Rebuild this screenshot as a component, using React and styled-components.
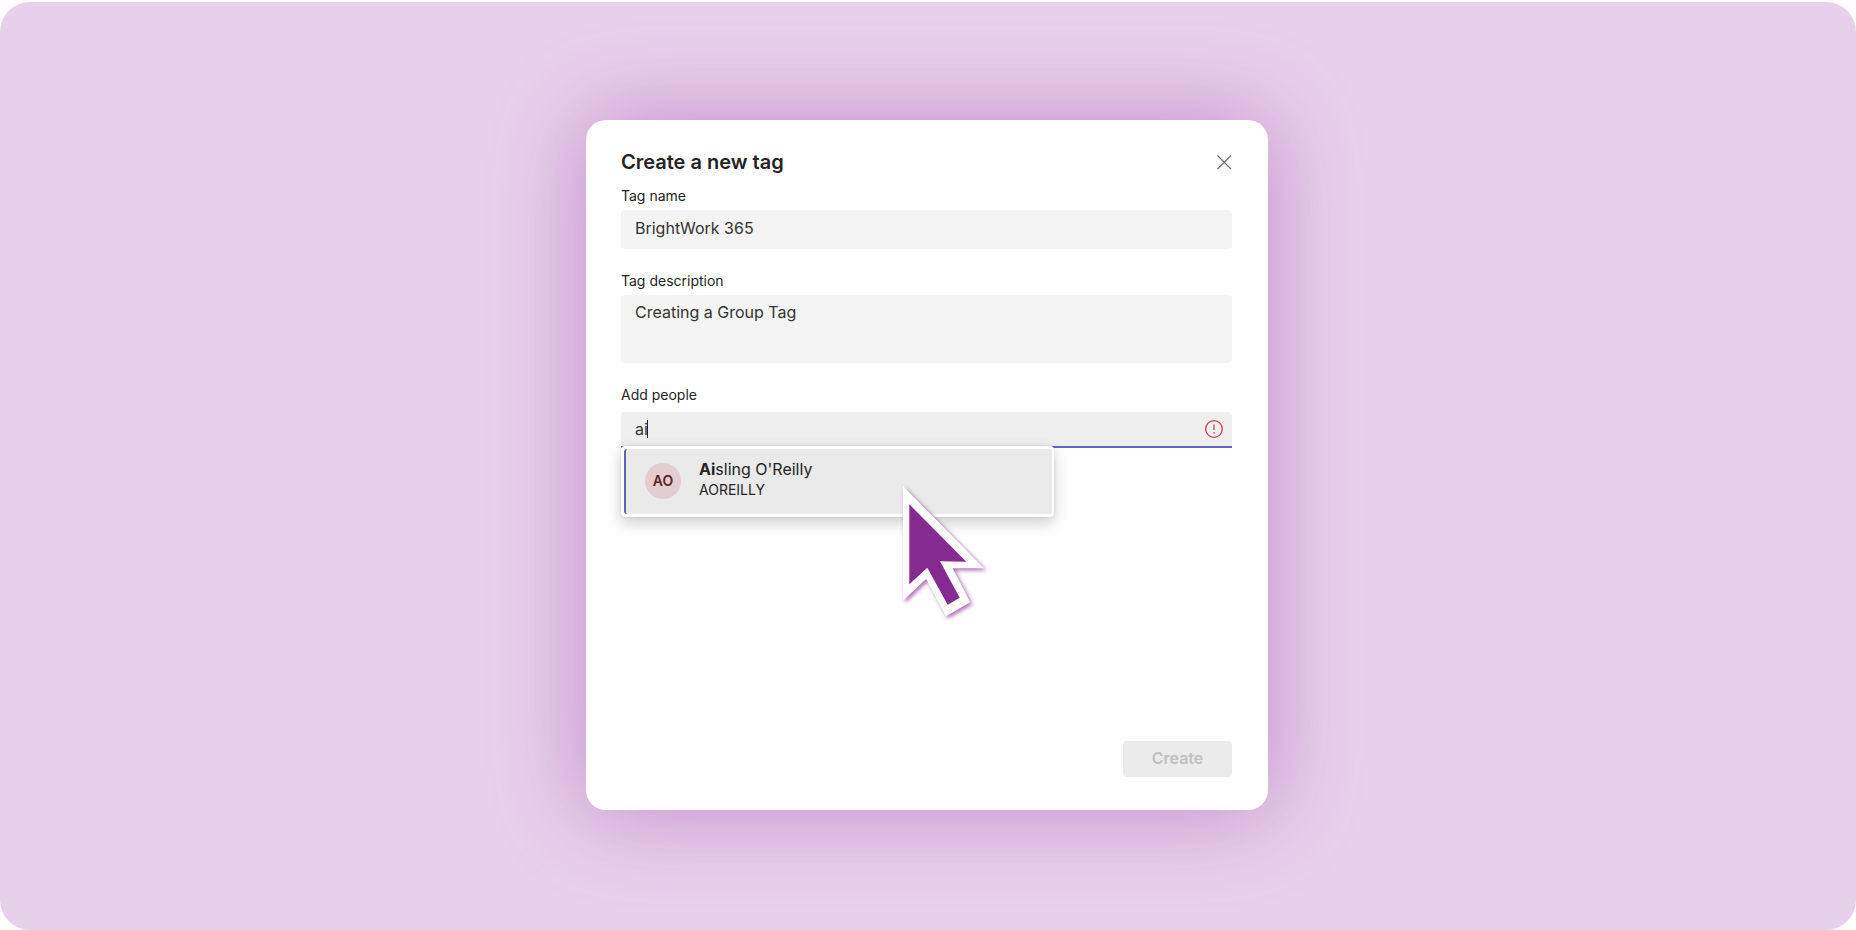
import React, { useState } from 'react';
import styled, { createGlobalStyle } from 'styled-components';

const GlobalStyle = createGlobalStyle`
  * {
    box-sizing: border-box;
  }

  body {
    margin: 0;
    background: #ffffff;
    color: #242424;
    font-family: Inter, "Liberation Sans", sans-serif;
  }

  button, input, textarea {
    font-family: inherit;
  }
`;

const Stage = styled.main`
  display: flex;
  justify-content: center;
  min-height: calc(100vh - 2px);
  margin-top: 2px;
  padding: 118px 24px 120px 22px;
  border-radius: 30px;
  background: #e7d1ea;
`;

const Dialog = styled.form`
  display: flex;
  flex-direction: column;
  width: 100%;
  max-width: 682px;
  padding: 30px 36px 33px 35px;
  border-radius: 20px;
  background: #ffffff;
  box-shadow: 0 0 90px rgba(158, 50, 175, 0.46);
`;

const Header = styled.header`
  display: flex;
  justify-content: space-between;
  align-items: center;
  margin-bottom: 12px;
`;

const Title = styled.h1`
  margin: 0;
  font-size: 20px;
  line-height: 24px;
  font-weight: 600;
`;

const CloseButton = styled.button`
  display: flex;
  padding: 0;
  border: none;
  background: none;
  color: #707070;
  cursor: pointer;
`;

const Field = styled.div`
  display: flex;
  flex-direction: column;
  gap: ${props => props.$gap || 4}px;
  margin-bottom: 22px;
`;

const Label = styled.label`
  font-size: 14px;
  line-height: 20px;
`;

const TextInput = styled.input`
  width: 100%;
  height: 39px;
  padding: 0 14px 4px;
  border: none;
  border-radius: 4px;
  outline: none;
  background: #f4f4f4;
  color: #333333;
  font-size: 16px;
`;

const TextArea = styled.textarea`
  display: block;
  width: 100%;
  height: 68px;
  padding: 5px 14px;
  border: none;
  border-radius: 4px;
  outline: none;
  resize: none;
  background: #f4f4f4;
  color: #333333;
  font-size: 16px;
  line-height: 24px;
`;

const PeopleBox = styled.div`
  position: relative;
  display: flex;
  align-items: center;
  height: 36px;
  padding: 0 9px 0 14px;
  border-bottom: 2px solid #6264c0;
  border-radius: 4px 4px 0 0;
  background: #efefef;
`;

const PeopleInput = styled.input`
  field-sizing: content;
  padding: 0;
  border: none;
  outline: none;
  background: none;
  color: #333333;
  font-size: 16px;
  caret-color: transparent;
`;

const Caret = styled.span`
  width: 1px;
  height: 18px;
  margin-left: -1px;
  background: #242424;
`;

const ErrorIcon = styled.svg`
  margin-left: auto;
`;

const Suggestions = styled.div`
  position: absolute;
  top: 100%;
  left: 0;
  width: 433px;
  max-width: 100%;
  padding: 3px 2px 3px 3px;
  border-radius: 4px;
  background: #ffffff;
  box-shadow: 0 6px 16px rgba(0, 0, 0, 0.2), 0 0 3px rgba(0, 0, 0, 0.1);
`;

const Suggestion = styled.button`
  display: flex;
  align-items: center;
  gap: 18px;
  width: 100%;
  height: 65px;
  padding: 0 19px 2px;
  border: none;
  border-left: 2px solid #6264b0;
  border-radius: 3px;
  background: #eaeaea;
  color: #242424;
  text-align: left;
  cursor: pointer;
`;

const Avatar = styled.span`
  display: flex;
  justify-content: center;
  align-items: center;
  width: 36px;
  height: 36px;
  border-radius: 50%;
  background: #e3cdd1;
  color: #56262b;
  font-size: 14px;
  font-weight: 600;
`;

const Person = styled.span`
  display: flex;
  flex-direction: column;
  gap: 1px;
  padding-bottom: 3px;
`;

const PersonName = styled.span`
  font-size: 16px;
  line-height: 20px;
`;

const PersonAlias = styled.span`
  font-size: 14px;
  line-height: 20px;
`;

const Match = styled.b`
  font-weight: 700;
`;

const Footer = styled.footer`
  display: flex;
  justify-content: flex-end;
  margin-top: auto;
`;

const CreateButton = styled.button`
  width: 109px;
  height: 36px;
  padding: 0 0 2px;
  border: none;
  border-radius: 4px;
  background: #ebebeb;
  color: #c0c0c0;
  font-size: 16px;
  font-weight: 600;
`;

const Pointer = styled.svg`
  position: absolute;
  top: 40px;
  left: 282px;
  overflow: visible;
  filter: drop-shadow(2px 2px 2px rgba(134, 38, 145, 0.7));
  pointer-events: none;
`;

const App = () => {
  const [name, setName] = useState('BrightWork 365');
  const [description, setDescription] = useState('Creating a Group Tag');
  const [query, setQuery] = useState('ai');

  return (
    <>
      <GlobalStyle />
      <Stage>
        <Dialog onSubmit={e => e.preventDefault()}>
          <Header>
            <Title>Create a new tag</Title>
            <CloseButton type="button" aria-label="Close">
              <svg width="15" height="15" viewBox="0 0 15 15" fill="none" stroke="currentColor" strokeWidth="1.2">
                <path d="M.5 .5l13.500 13.500M14 .5l-13.500 13.500" />
              </svg>
            </CloseButton>
          </Header>

          <Field>
            <Label htmlFor="tag-name">Tag name</Label>
            <TextInput id="tag-name" value={name} onChange={e => setName(e.target.value)} />
          </Field>

          <Field>
            <Label htmlFor="tag-description">Tag description</Label>
            <TextArea id="tag-description" value={description} onChange={e => setDescription(e.target.value)} />
          </Field>

          <Field $gap={7}>
            <Label htmlFor="tag-people">Add people</Label>
            <PeopleBox>
              <PeopleInput id="tag-people" size="2" value={query} onChange={e => setQuery(e.target.value)} />
              <Caret />
              <ErrorIcon width="18" height="18" viewBox="0 0 18 18" fill="none" stroke="#bf4152">
                <circle cx="9" cy="9" r="8.300" strokeWidth="1.3" />
                <path d="M9 4.500v5.500M9 12v1.500" strokeWidth="1.3" />
              </ErrorIcon>
              <Suggestions>
                <Suggestion type="button">
                  <Avatar>AO</Avatar>
                  <Person>
                    <PersonName><Match>Ai</Match>sling O'Reilly</PersonName>
                    <PersonAlias>AOREILLY</PersonAlias>
                  </Person>
                </Suggestion>
                <Pointer width="82" height="131" viewBox="0 0 82 131">
                  <path fill="#ffffff" d="M0 0L81 82.300H49.700L67.300 116.300L43 130.300L23 93L0 114.700Z" />
                  <path fill="#862991" d="M6.300 18.300L63.300 75.700L37 75.300L56.700 111.700L44.700 118.700L24.300 81.700L6.300 98.300Z" />
                </Pointer>
              </Suggestions>
            </PeopleBox>
          </Field>

          <Footer>
            <CreateButton type="submit" disabled>Create</CreateButton>
          </Footer>
        </Dialog>
      </Stage>
    </>
  );
};

export default App;
